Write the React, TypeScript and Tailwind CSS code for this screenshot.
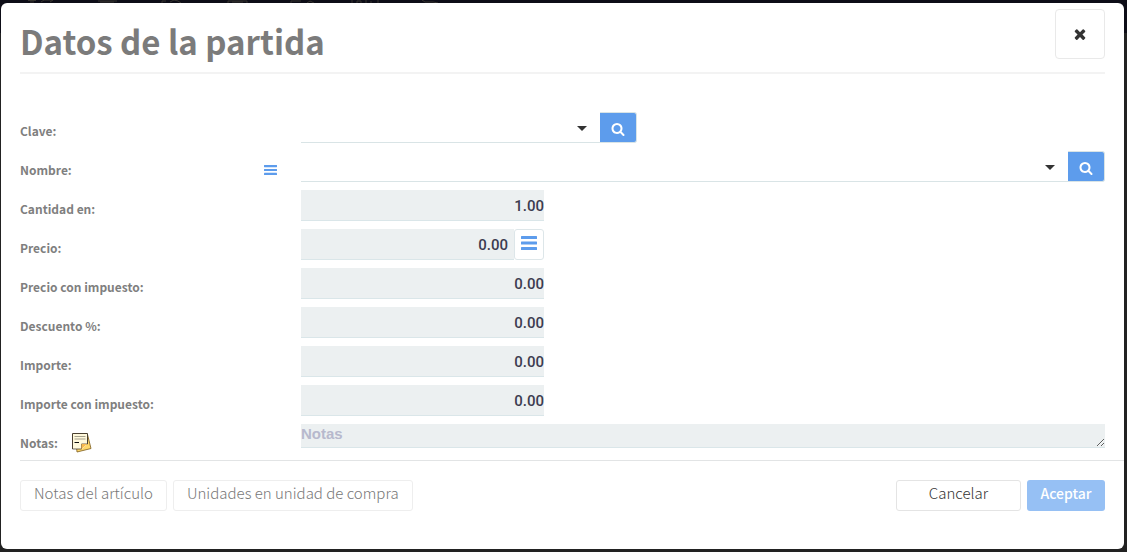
import { useState } from "react";
import type { ReactNode } from "react";

function SearchIcon() {
    return (
        <svg viewBox="0 0 1792 1792" className="h-3.5 w-3.5 fill-white" aria-hidden="true">
            <path
                fillRule="evenodd"
                d="M1216 832q0-185-131.5-316.5t-316.5-131.5-316.5 131.5-131.5 316.5 131.5 316.5 316.5 131.5 316.5-131.5 131.5-316.5zm512 832q0 52-38 90t-90 38q-54 0-90-38l-343-342q-179 124-399 124-143 0-273.5-55.5t-225-150-150-225-55.5-273.5 55.5-273.5 150-225 225-150 273.5-55.5 273.5 55.5 225 150 150 225 55.5 273.5q0 220-124 399l343 343q37 37 37 90z"
            />
        </svg>
    );
}

function CloseIcon() {
    return (
        <svg viewBox="0 0 1792 1792" className="h-4 w-4 fill-[#333]" aria-hidden="true">
            <path d="M1490 1322q0 40-28 68l-136 136q-28 28-68 28t-68-28l-294-294-294 294q-28 28-68 28t-68-28l-136-136q-28-28-28-68t28-68l294-294-294-294q-28-28-28-68t28-68l136-136q28-28 68-28t68 28l294 294 294-294q28-28 68-28t68 28l136 136q28 28 28 68t-28 68l-294 294 294 294q28 28 28 68z" />
        </svg>
    );
}

function BarsIcon({ className }: { className: string }) {
    return (
        <svg viewBox="0 0 16 14" preserveAspectRatio="none" className={className} aria-hidden="true">
            <rect x="0" y="0" width="16" height="3" rx="0.5" />
            <rect x="0" y="5.5" width="16" height="3" rx="0.5" />
            <rect x="0" y="11" width="16" height="3" rx="0.5" />
        </svg>
    );
}

function NotesIcon() {
    return (
        <svg viewBox="0 0 20 20" className="h-5 w-5" aria-hidden="true">
            <path d="M15.5 1.5 19 15.5 5 19 4.5 14Z" fill="#ffd76a" stroke="#7a5a1c" strokeWidth="0.8" />
            <path d="M0.5 0.5H15.5V11L10 16H0.5Z" fill="#fff9dc" />
            <path d="M0.5 16V0.5H15.5V11" fill="none" stroke="#4a4030" />
            <path d="M0.5 16H9.5V11H15.5" fill="none" stroke="#4a4030" strokeWidth="0.8" />
            <path d="M15 11H9.5V16Z" fill="#f7b84e" />
            <path d="M2.5 3.5H13.5M2.5 6H13.5" stroke="#8f8a78" strokeWidth="0.8" />
            <path d="M2.5 9.5H7" stroke="#111" />
        </svg>
    );
}

// Tips of the toolbar icons that stay visible over the dialog
function Toolbar() {
    return (
        <div className="absolute inset-x-0 top-0 h-[33px] bg-[#0d0d17]">
            <svg width="450" height="3" viewBox="0 0 450 3" fill="none" stroke="#35332f" aria-hidden="true">
                <path d="M28 0.5H36M30 2H34M41 2L44 0H53L50 2M98 1H117M100 2H114M162 3V1H166M170 2L174 0L178 1L181 3M228 3V1H247V3M232 2H243M291 3V1H301M307 3L310 1L314 3M352 3V0M357 3V1H361V3M366 0V3M371 3V1M378 0V3M422 0L425 2H433L438 3" />
            </svg>
        </div>
    );
}

function Row({ id, label, extra, children }: { id: string; label: string; extra?: ReactNode; children: ReactNode }) {
    return (
        <div className="grid grid-cols-[281px_1fr]">
            <div className="flex h-[31px] items-center pt-1.5 pr-6">
                <label htmlFor={id} className="text-[12px] leading-5 font-bold text-[#7f7f7f]">
                    {label}
                </label>
                {extra}
            </div>
            {children}
        </div>
    );
}

function Combo({ id, label, className }: { id: string; label: string; className: string }) {
    return (
        <div className={`flex h-[31px] ${className}`}>
            <div className="relative flex-1">
                <select id={id} className="h-full w-full appearance-none border-b border-[#d9e4e6] bg-white pr-8 outline-none" />
                <svg viewBox="0 0 10 5" className="pointer-events-none absolute top-3.5 right-[13px] h-[5px] w-2.5 fill-[#333]" aria-hidden="true">
                    <path d="M0 0H10L5 5Z" />
                </svg>
            </div>
            <button
                type="button"
                aria-label={label}
                className="flex w-[37px] items-center justify-center rounded-r-[3px] border border-l-0 border-[#d9e4e6] bg-[#5d9cec] pt-0.5"
            >
                <SearchIcon />
            </button>
        </div>
    );
}

const amounts = [
    { id: "cantidad", label: "Cantidad en:", value: "1.00" },
    { id: "precio", label: "Precio:", value: "0.00", menu: true },
    { id: "precioImpuesto", label: "Precio con impuesto:", value: "0.00" },
    { id: "descuento", label: "Descuento %:", value: "0.00" },
    { id: "importe", label: "Importe:", value: "0.00" },
    { id: "importeImpuesto", label: "Importe con impuesto:", value: "0.00" },
];

export default function App() {
    const [values, setValues] = useState<Record<string, string>>(
        Object.fromEntries(amounts.map((a) => [a.id, a.value]))
    );
    const [notes, setNotes] = useState("");

    return (
        <div className="relative flex min-h-screen bg-[#222] pt-[3px] pr-[3px] pb-[3px] pl-px font-['Noto_Sans_CJK_SC',sans-serif]">
            <Toolbar />

            <div role="dialog" aria-labelledby="title" className="relative flex-1 rounded-md bg-white pl-[19px]">
                <header className="mr-[19px] flex h-[71px] justify-between border-b-2 border-[#f3f3f3] pt-1.5">
                    <h1 id="title" className="text-[33px] leading-[64px] font-bold text-[#7b7b7b]">
                        Datos de la partida
                    </h1>
                    <button
                        type="button"
                        aria-label="Cerrar"
                        className="flex h-[50px] w-[50px] items-center justify-center rounded border border-[#e9e9e9]"
                    >
                        <CloseIcon />
                    </button>
                </header>

                <form className="mr-[19px] flex flex-col gap-2 pt-[38px] pb-3">
                    <Row id="clave" label="Clave:">
                        <Combo id="clave" label="Buscar clave" className="w-[336px]" />
                    </Row>
                    <Row
                        id="nombre"
                        label="Nombre:"
                        extra={
                            <button type="button" aria-label="Opciones de nombre" className="ml-auto">
                                <BarsIcon className="h-2.5 w-[13px] fill-[#5d9cec]" />
                            </button>
                        }
                    >
                        <Combo id="nombre" label="Buscar nombre" className="w-full" />
                    </Row>

                    {amounts.map((a) => (
                        <Row key={a.id} id={a.id} label={a.label}>
                            <div className="flex h-[31px] w-[243px]">
                                <input
                                    id={a.id}
                                    type="text"
                                    value={values[a.id]}
                                    onChange={(e) => setValues({ ...values, [a.id]: e.target.value })}
                                    className={`min-w-0 flex-1 border-b border-[#dae6e9] bg-[#ecf0f1] pt-0.5 text-right font-['Roboto',sans-serif] text-[15px] font-medium text-[#3c3c50] outline-none ${a.menu ? "pr-1.5" : ""}`}
                                />
                                {a.menu && (
                                    <button
                                        type="button"
                                        aria-label="Lista de precios"
                                        className="flex w-[30px] justify-center rounded-[3px] border border-[#dde6e9] bg-white pt-1.5"
                                    >
                                        <BarsIcon className="h-3.5 w-4 fill-[#5d9cec]" />
                                    </button>
                                )}
                            </div>
                        </Row>
                    ))}

                    <div className="h-6">
                        <Row
                            id="notas"
                            label="Notas:"
                            extra={
                                <span className="ml-3.5">
                                    <NotesIcon />
                                </span>
                            }
                        >
                            <textarea
                                id="notas"
                                rows={1}
                                placeholder="Notas"
                                value={notes}
                                onChange={(e) => setNotes(e.target.value)}
                                className="h-6 w-full resize overflow-hidden border-b border-[#dae6e9] bg-[#ecf0f1] font-['Liberation_Sans',sans-serif] text-[15px] leading-5 font-bold outline-none placeholder:text-[#b7b9cd]"
                            />
                        </Row>
                    </div>
                </form>

                <footer className="flex gap-1.5 border-t border-[#e2e4e5] pt-[19px] pr-[19px] text-[15px] leading-5 font-light">
                    <button type="button" className="h-[31px] rounded-[3px] border border-[#eee] px-[13px] pb-1.5 text-[#777]">
                        Notas del artículo
                    </button>
                    <button type="button" className="h-[31px] rounded-[3px] border border-[#eee] px-[13px] pb-1.5 text-[#777]">
                        Unidades en unidad de compra
                    </button>
                    <button type="button" className="ml-auto h-[31px] w-[125px] rounded-[3px] border border-[#e4e4e4] pb-1.5 text-[#333]">
                        Cancelar
                    </button>
                    <button type="submit" className="h-[31px] w-[78px] rounded-[3px] bg-[#96c0f4] pb-1.5 text-[14px] font-medium text-white">
                        Aceptar
                    </button>
                </footer>
            </div>
        </div>
    );
}
